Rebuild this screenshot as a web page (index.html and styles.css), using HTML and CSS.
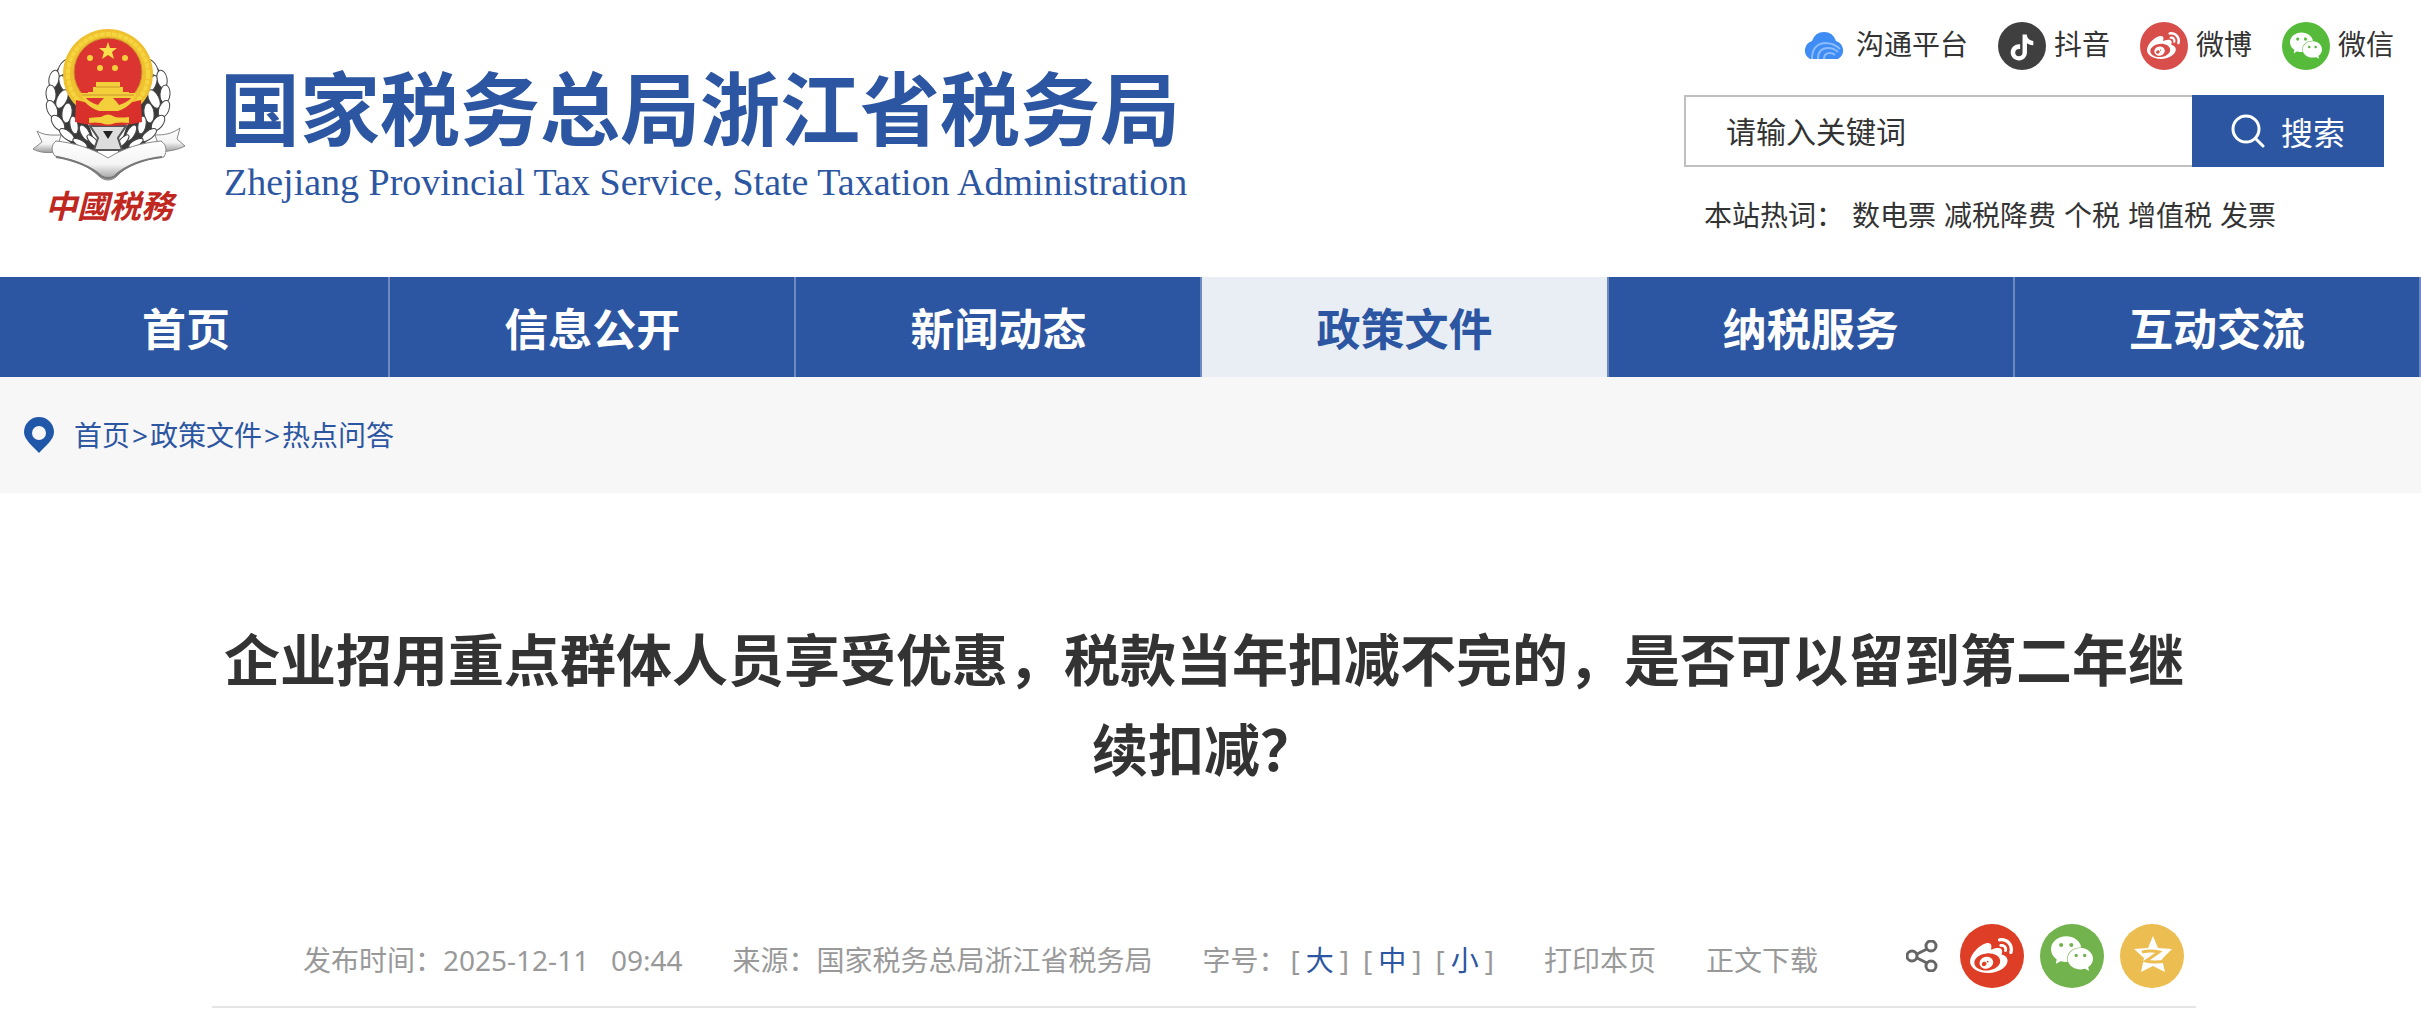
FILE: index.html
```html
<!DOCTYPE html>
<html lang="zh-CN">
<head>
    <meta charset="UTF-8">
    <meta name="viewport" content="width=device-width, initial-scale=1.0">
    <title>国家税务总局浙江省税务局</title>
    <link rel="stylesheet" href="styles.css">
</head>
<body>
    <svg class="sprite" aria-hidden="true">
        <symbol id="weibo" viewBox="0 0 24 24">
            <path d="M10.098 20.323c-3.977.391-7.414-1.406-7.672-4.02-.259-2.609 2.759-5.047 6.74-5.441 3.979-.394 7.413 1.404 7.671 4.018.259 2.6-2.759 5.049-6.737 5.439l-.002.004zM9.05 17.219c-.384.616-1.208.884-1.829.602-.612-.279-.793-.991-.406-1.593.379-.595 1.176-.861 1.793-.601.622.263.82.972.442 1.592zm1.27-1.627c-.141.237-.449.353-.689.253-.236-.09-.313-.361-.177-.586.138-.227.436-.346.672-.24.239.09.315.36.18.601l.014-.028zm.176-2.719c-1.893-.493-4.033.45-4.857 2.118-.836 1.704-.026 3.591 1.886 4.21 1.983.64 4.318-.341 5.132-2.179.8-1.793-.201-3.642-2.161-4.149zm7.563-1.224c-.346-.105-.57-.18-.405-.615.375-.977.42-1.804 0-2.404-.781-1.112-2.915-1.053-5.364-.03 0 0-.766.331-.571-.271.376-1.217.315-2.224-.27-2.809-1.338-1.337-4.869.045-7.888 3.08C1.309 10.87 0 13.273 0 15.348c0 3.981 5.099 6.395 10.086 6.395 6.536 0 10.888-3.801 10.888-6.82 0-1.822-1.547-2.854-2.915-3.284v.01zm1.908-5.092c-.766-.856-1.908-1.187-2.96-.962-.436.09-.706.511-.616.932.09.42.511.691.932.602.511-.105 1.067.044 1.442.465.376.421.466.977.316 1.473-.136.406.089.856.51.992.405.119.857-.105.992-.512.33-1.021.12-2.178-.646-3.035l.03.045zm2.418-2.195c-1.576-1.757-3.905-2.419-6.054-1.968-.496.104-.812.587-.706 1.081.104.496.586.813 1.082.707 1.532-.331 3.185.15 4.296 1.383 1.112 1.246 1.429 2.943.947 4.416-.165.48.106 1.007.586 1.157.479.165.991-.104 1.157-.586.675-2.088.241-4.478-1.338-6.235l.03.045z"/>
        </symbol>
        <symbol id="wechat" viewBox="0 0 24 24">
            <path d="M8.691 2.188C3.891 2.188 0 5.476 0 9.53c0 2.212 1.17 4.203 3.002 5.55a.59.59 0 0 1 .213.665l-.39 1.48c-.019.07-.048.141-.048.213 0 .163.13.295.29.295a.326.326 0 0 0 .167-.054l1.903-1.114a.864.864 0 0 1 .717-.098 10.16 10.16 0 0 0 2.837.403c.276 0 .543-.027.811-.05-.857-2.578.157-4.972 1.932-6.446 1.703-1.415 3.882-1.98 5.853-1.838-.576-3.583-4.196-6.348-8.596-6.348zM5.785 5.991c.642 0 1.162.529 1.162 1.18a1.17 1.17 0 0 1-1.162 1.178A1.17 1.17 0 0 1 4.623 7.17c0-.651.52-1.18 1.162-1.18zm5.813 0c.642 0 1.162.529 1.162 1.18a1.17 1.17 0 0 1-1.162 1.178 1.17 1.17 0 0 1-1.162-1.178c0-.651.52-1.18 1.162-1.18zm5.34 2.867c-1.797-.052-3.746.512-5.28 1.786-1.72 1.428-2.687 3.72-1.78 6.22.942 2.453 3.666 4.229 6.884 4.229.826 0 1.622-.12 2.361-.336a.722.722 0 0 1 .598.082l1.584.926a.272.272 0 0 0 .14.047c.134 0 .24-.111.24-.247 0-.06-.023-.12-.038-.177l-.327-1.233a.582.582 0 0 1-.023-.156.49.49 0 0 1 .201-.398C23.024 18.48 24 16.82 24 14.98c0-3.21-2.931-5.837-6.656-6.088V8.89c-.135-.01-.27-.027-.407-.03zm-2.53 3.274c.535 0 .969.44.969.982a.976.976 0 0 1-.969.983.976.976 0 0 1-.969-.983c0-.542.434-.982.97-.982zm4.844 0c.535 0 .969.44.969.982a.976.976 0 0 1-.969.983.976.976 0 0 1-.969-.983c0-.542.434-.982.969-.982z"/>
        </symbol>
        <symbol id="douyin" viewBox="0 0 24 24">
            <path d="M12.525.02c1.31-.02 2.61-.01 3.91-.02.08 1.53.63 3.09 1.75 4.17 1.12 1.11 2.7 1.62 4.24 1.79v4.03c-1.44-.05-2.89-.35-4.2-.97-.57-.26-1.1-.59-1.62-.93-.01 2.92.01 5.84-.02 8.75-.08 1.4-.54 2.79-1.35 3.94-1.31 1.92-3.58 3.17-5.91 3.21-1.43.08-2.86-.31-4.08-1.03-2.02-1.19-3.44-3.37-3.65-5.71-.02-.5-.03-1-.01-1.49.18-1.9 1.12-3.72 2.58-4.96 1.66-1.44 3.98-2.13 6.15-1.72.02 1.48-.04 2.96-.04 4.44-.99-.32-2.15-.23-3.02.37-.63.41-1.11 1.04-1.36 1.75-.21.51-.15 1.07-.14 1.61.24 1.64 1.82 3.02 3.5 2.87 1.12-.01 2.19-.66 2.77-1.61.19-.33.4-.67.41-1.06.1-1.79.06-3.57.07-5.36.01-4.03-.01-8.05.02-12.07z"/>
        </symbol>
    </svg>

    <header class="header">
        <a class="brand" href="#">
            <span class="emblem">
                <svg class="emblem-img" viewBox="0 0 154 154" role="img" aria-label="中国税务">
                    <defs>
                        <!-- left half of the wheat wreath -->
                        <g id="wreath" fill="#fff" stroke="#444" stroke-width="1">
                            <path d="M36 30C8 52 8 100 50 122l16 2-8-24-16-30z" fill="#3a3a3a" stroke="none"/>
                            <ellipse cx="31" cy="40" rx="4" ry="9" transform="rotate(28 31 40)"/>
                            <ellipse cx="22" cy="51" rx="5" ry="9" transform="rotate(12 22 51)"/>
                            <ellipse cx="32" cy="56" rx="4" ry="9" transform="rotate(-24 32 56)"/>
                            <ellipse cx="19" cy="66" rx="5" ry="9" transform="rotate(-4 19 66)"/>
                            <ellipse cx="30" cy="71" rx="5" ry="10" transform="rotate(26 30 71)"/>
                            <ellipse cx="20" cy="81" rx="5" ry="9" transform="rotate(-22 20 81)"/>
                            <ellipse cx="35" cy="85" rx="5" ry="10" transform="rotate(8 35 85)"/>
                            <ellipse cx="26" cy="95" rx="5" ry="9" transform="rotate(-38 26 95)"/>
                            <ellipse cx="42" cy="97" rx="4" ry="9" transform="rotate(-10 42 97)"/>
                            <ellipse cx="35" cy="107" rx="4" ry="9" transform="rotate(-52 35 107)"/>
                            <ellipse cx="53" cy="105" rx="4" ry="9" transform="rotate(-30 53 105)"/>
                            <ellipse cx="48" cy="115" rx="3" ry="8" transform="rotate(-62 48 115)"/>
                            <ellipse cx="61" cy="113" rx="3" ry="8" transform="rotate(-44 61 113)"/>
                        </g>
                        <linearGradient id="ribbon" x1="0" y1="0" x2="0" y2="1">
                            <stop offset="0" stop-color="#fff"/>
                            <stop offset=".6" stop-color="#f4f4f4"/>
                            <stop offset="1" stop-color="#9a9a9a"/>
                        </linearGradient>
                    </defs>
                    <use href="#wreath"/>
                    <use href="#wreath" transform="matrix(-1 0 0 1 152 0)"/>
                    <path d="M58 98h36l-8 12 4 12H62l4-12z" fill="#ddd" stroke="#555" stroke-width="2"/>
                    <path d="M71 103h10l-5 8z" fill="#222"/>
                    <g fill="url(#ribbon)" stroke="#888" stroke-width="1">
                        <path d="M5 103c8 5 16 4 24 4l-5 17c-8 1-16 1-23-3l9-7z"/>
                        <path d="M148 100c-8 6-16 7-25 7l6 17c8-1 17-2 24-6l-8-7z"/>
                        <path d="M24 113c18 2 36 7 52 17 16-10 32-15 53-17 6 4 6 10 3 16-20 2-38 8-48 20-5 4-11 4-16 0-12-12-28-18-45-21-4-5-4-11 1-15z"/>
                    </g>
                    <path d="M24 129c18 3 34 9 45 19 5 3 9 3 14 0 10-10 28-17 47-19" fill="none" stroke="#777" stroke-width="2"/>
                    <circle cx="76" cy="46" r="45" fill="#efc02f"/>
                    <circle cx="76" cy="46" r="40" fill="none" stroke="#f5d640" stroke-width="4" stroke-dasharray="5 1"/>
                    <path d="M44 72l32 8 33-8 1 22q-34 8-67 0z" fill="#d9302c"/>
                    <circle cx="76" cy="44" r="34" fill="#dc3430" stroke="#c9962a" stroke-width="1"/>
                    <path d="M76 14l2 6h7l-5 4 2 7-6-4-6 4 2-7-5-4h7z" fill="#f8e04c"/>
                    <g fill="#f3cf3c">
                        <circle cx="58" cy="30" r="3"/><circle cx="93" cy="30" r="3"/>
                        <circle cx="68" cy="40" r="3"/><circle cx="83" cy="40" r="3"/>
                        <path d="M64 54h24v5h3v5h6v2H56v-2h5v-5h3z"/>
                        <path d="M49 65h55q-2 12-18 18H67q-16-6-18-18z"/>
                        <path d="M57 90q10-1 12-1 7-5 14 0 6 1 14 0v6q-8-1-14 0-7 3-14 0-6-1-12 0z"/>
                    </g>
                    <path d="M54 70h18q-4 4-6 7-9-3-12-7zM99 70H81q4 4 6 7 9-3 12-7z" fill="#dc3430"/>
                    <path d="M50 67h52M64 59h24" stroke="#c9962a" stroke-width="1"/>
                </svg>
                <span class="emblem-name">中國税務</span>
            </span>
            <span class="brand-text">
                <span class="brand-cn">国家税务总局浙江省税务局</span>
                <span class="brand-en">Zhejiang Provincial Tax Service, State Taxation Administration</span>
            </span>
        </a>

        <div class="tools">
            <ul class="social">
                <li>
                    <a href="#">
                        <svg class="social-icon" viewBox="0 0 48 48" aria-hidden="true">
                            <path d="M10 37q-6-4-5-10 1-6 7-8 3-9 12-9t12 9q6 2 7 8 1 6-5 10z" fill="#3f8cf5"/>
                            <path d="M12 37q0-15 13-16 9 0 15 6M18 37q0-11 10-11 6 0 10 4M24 37q0-6 6-6 3 0 5 2" fill="none" stroke="#8abbfa" stroke-width="2"/>
                        </svg>
                        <span>沟通平台</span>
                    </a>
                </li>
                <li>
                    <a href="#">
                        <svg class="social-icon" viewBox="0 0 48 48" aria-hidden="true">
                            <circle cx="24" cy="24" r="24" fill="#3f3f3f"/>
                            <use href="#douyin" x="11" y="11" width="26" height="29" fill="#fff"/>
                        </svg>
                        <span>抖音</span>
                    </a>
                </li>
                <li>
                    <a href="#">
                        <svg class="social-icon" viewBox="0 0 48 48" aria-hidden="true">
                            <circle cx="24" cy="24" r="24" fill="#d84e4b"/>
                            <use href="#weibo" x="7" y="7" width="33" height="33" fill="#fff"/>
                        </svg>
                        <span>微博</span>
                    </a>
                </li>
                <li>
                    <a href="#">
                        <svg class="social-icon" viewBox="0 0 48 48" aria-hidden="true">
                            <circle cx="24" cy="24" r="24" fill="#56ba3a"/>
                            <use href="#wechat" x="8" y="7" width="32" height="33" fill="#fff"/>
                        </svg>
                        <span>微信</span>
                    </a>
                </li>
            </ul>

            <form class="search">
                <input class="search-input" type="text" placeholder="请输入关键词" aria-label="请输入关键词">
                <button class="search-btn" type="button">
                    <svg class="search-icon" viewBox="0 0 34 34" fill="none" stroke="#fff" stroke-width="3" stroke-linecap="round" aria-hidden="true">
                        <circle cx="15" cy="15" r="13"/>
                        <path d="M25 25l7 7"/>
                    </svg>
                    搜索
                </button>
            </form>

            <div class="hot">
                <span>本站热词：</span>
                <a href="#">数电票</a>
                <a href="#">减税降费</a>
                <a href="#">个税</a>
                <a href="#">增值税</a>
                <a href="#">发票</a>
            </div>
        </div>
    </header>

    <nav class="nav">
        <div class="nav-list">
            <a href="#">首页</a>
            <a href="#">信息公开</a>
            <a href="#">新闻动态</a>
            <a href="#" class="active">政策文件</a>
            <a href="#">纳税服务</a>
            <a href="#">互动交流</a>
        </div>
    </nav>

    <div class="crumbs">
        <svg class="pin" viewBox="0 0 30 36" aria-hidden="true">
            <path d="M15 0a15 15 0 0 1 15 15c0 8-9 14-15 21C9 29 0 23 0 15A15 15 0 0 1 15 0zm0 9a7 7 0 1 0 0 14 7 7 0 0 0 0-14z" fill="#2157a8"/>
        </svg>
        <a href="#">首页</a><span class="sep">&gt;</span><a href="#">政策文件</a><span class="sep">&gt;</span><a href="#">热点问答</a>
    </div>

    <main class="article">
        <h1 class="title">企业招用重点群体人员享受优惠，税款当年扣减不完的，是否可以留到第二年继续扣减？</h1>

        <div class="info">
            <div class="meta">
                <span>发布时间：2025-12-11&nbsp;&nbsp; 09:44</span>
                <span>来源：国家税务总局浙江省税务局</span>
                <div class="sizes">
                    <span>字号：</span>
                    <div class="size-list">
                        <span class="size">[<button type="button">大</button>]</span>
                        <span class="size">[<button type="button">中</button>]</span>
                        <span class="size">[<button type="button">小</button>]</span>
                    </div>
                </div>
                <a href="#">打印本页</a>
                <a href="#">正文下载</a>
            </div>

            <div class="share">
                <svg class="share-icon" viewBox="0 0 32 32" fill="none" stroke="#666" stroke-width="3" aria-hidden="true">
                    <circle cx="6" cy="16" r="5"/>
                    <circle cx="25" cy="6" r="5"/>
                    <circle cx="25" cy="26" r="5"/>
                    <path d="M11 14l10-5M11 18l10 5"/>
                </svg>
                <a href="#" aria-label="微博">
                    <svg class="share-btn" viewBox="0 0 64 64">
                        <circle cx="32" cy="32" r="32" fill="#de3d26"/>
                        <use href="#weibo" x="10" y="10" width="43" height="43" fill="#fff"/>
                    </svg>
                </a>
                <a href="#" aria-label="微信">
                    <svg class="share-btn" viewBox="0 0 64 64">
                        <circle cx="32" cy="32" r="32" fill="#72b34d"/>
                        <use href="#wechat" x="11" y="8" width="42" height="43" fill="#fff"/>
                    </svg>
                </a>
                <a href="#" aria-label="QQ空间">
                    <svg class="share-btn" viewBox="0 0 64 64">
                        <circle cx="32" cy="32" r="32" fill="#ecbd50"/>
                        <path d="M33 12l5 12 14 1-10 10 3 13-12-6-12 6 3-14-10-9 14-1z" fill="#fff"/>
                        <path d="M22 28q9-2 17 0L26 37q8 2 20 0" fill="none" stroke="#ecbd50" stroke-width="3"/>
                    </svg>
                </a>
            </div>
        </div>
    </main>
</body>
</html>
```
FILE: styles.css
```css
* {
    box-sizing: border-box;
}
body {
    margin: 0;
    background-color: #fff;
    color: #333;
    font-family: "Noto Sans", "Noto Sans CJK SC", sans-serif;
    font-size: 28px;
    line-height: 40px;
    overflow-x: hidden;
}
a {
    color: inherit;
    text-decoration: none;
}
button,
input {
    font-family: inherit;
}
.sprite {
    position: absolute;
    width: 0;
    height: 0;
}

/* header */
.header {
    display: flex;
    justify-content: space-between;
    padding: 22px 27px 42px 32px;
}
.brand {
    display: flex;
    gap: 34px;
    color: #2c56a1;
    padding-top: 6px;
}
.emblem {
    display: flex;
    flex-direction: column;
    align-items: center;
}
.emblem-img {
    width: 154px;
    height: 154px;
}
.emblem-name {
    color: #c0281f;
    font-size: 32px;
    font-weight: bold;
    font-style: italic;
    line-height: 48px;
}
.brand-text {
    display: flex;
    flex-direction: column;
    padding-top: 34px;
    white-space: nowrap;
}
.brand-cn {
    font-size: 80px;
    font-weight: bold;
    line-height: 92px;
}
.brand-en {
    padding-left: 4px;
    font-family: "Liberation Serif", serif;
    font-size: 38px;
    line-height: 56px;
}
.tools {
    display: flex;
    flex-direction: column;
    width: 710px;
}
.social {
    display: flex;
    justify-content: flex-end;
    gap: 30px;
    margin: 0;
    padding: 0;
    list-style: none;
}
.social a {
    display: flex;
    align-items: center;
    gap: 8px;
}
.social span {
    padding-bottom: 4px;
}
.social-icon {
    width: 48px;
    height: 48px;
}
.search {
    display: flex;
    height: 72px;
    margin: 25px 10px 0 0;
}
.search-input {
    flex: 1;
    min-width: 0;
    padding: 0 40px;
    border: 2px solid #c0c0c0;
    border-right: none;
    border-radius: 0;
    font-size: 30px;
    color: #333;
}
.search-input::placeholder {
    color: #333;
}
.search-btn {
    display: flex;
    align-items: center;
    justify-content: center;
    gap: 16px;
    width: 192px;
    border: none;
    background-color: #2c56a1;
    color: #fff;
    font-size: 32px;
    cursor: pointer;
}
.search-icon {
    width: 34px;
    height: 34px;
}
.hot {
    display: flex;
    gap: 8px;
    padding: 28px 0 0 20px;
}

/* main menu */
.nav {
    background-color: #2c56a1;
    overflow: hidden;
}
.nav-list {
    display: grid;
    grid-template-columns: repeat(6, 1fr);
    margin-left: -16px;
}
.nav-list a {
    padding-top: 4px;
    border-right: 2px solid #6c8abf;
    color: #fff;
    font-size: 44px;
    font-weight: bold;
    line-height: 96px;
    text-align: center;
}
.nav-list .active {
    background-color: #e9eef5;
    color: #2c56a1;
}

/* breadcrumb */
.crumbs {
    display: flex;
    align-items: center;
    padding: 38px 24px;
    background-color: #f7f7f7;
    color: #2c56a1;
}
.pin {
    width: 30px;
    height: 36px;
    margin-right: 20px;
}
.sep {
    padding: 0 2px;
}

/* article */
.article {
    margin: 0 225px 0 212px;
}
.title {
    margin: 0;
    padding: 121px 0 130px;
    font-size: 56px;
    line-height: 90px;
    text-align: center;
}
.info {
    display: flex;
    align-items: center;
    justify-content: space-between;
    padding: 0 12px 18px 91px;
    border-bottom: 2px solid #e5e5e5;
}
.meta {
    display: flex;
    gap: 50px;
    padding-top: 8px;
    color: #999;
}
.sizes {
    display: flex;
    gap: 4px;
}
.size-list {
    display: flex;
    gap: 14px;
}
.size {
    display: flex;
    gap: 6px;
}
.size button {
    padding: 0;
    border: none;
    background: none;
    color: #2c56a1;
    font-size: 28px;
    line-height: 40px;
    cursor: pointer;
}
.share {
    display: flex;
    align-items: center;
    gap: 16px;
}
.share a {
    display: flex;
}
.share-icon {
    width: 32px;
    height: 32px;
    margin-right: 6px;
}
.share-btn {
    width: 64px;
    height: 64px;
}
```
